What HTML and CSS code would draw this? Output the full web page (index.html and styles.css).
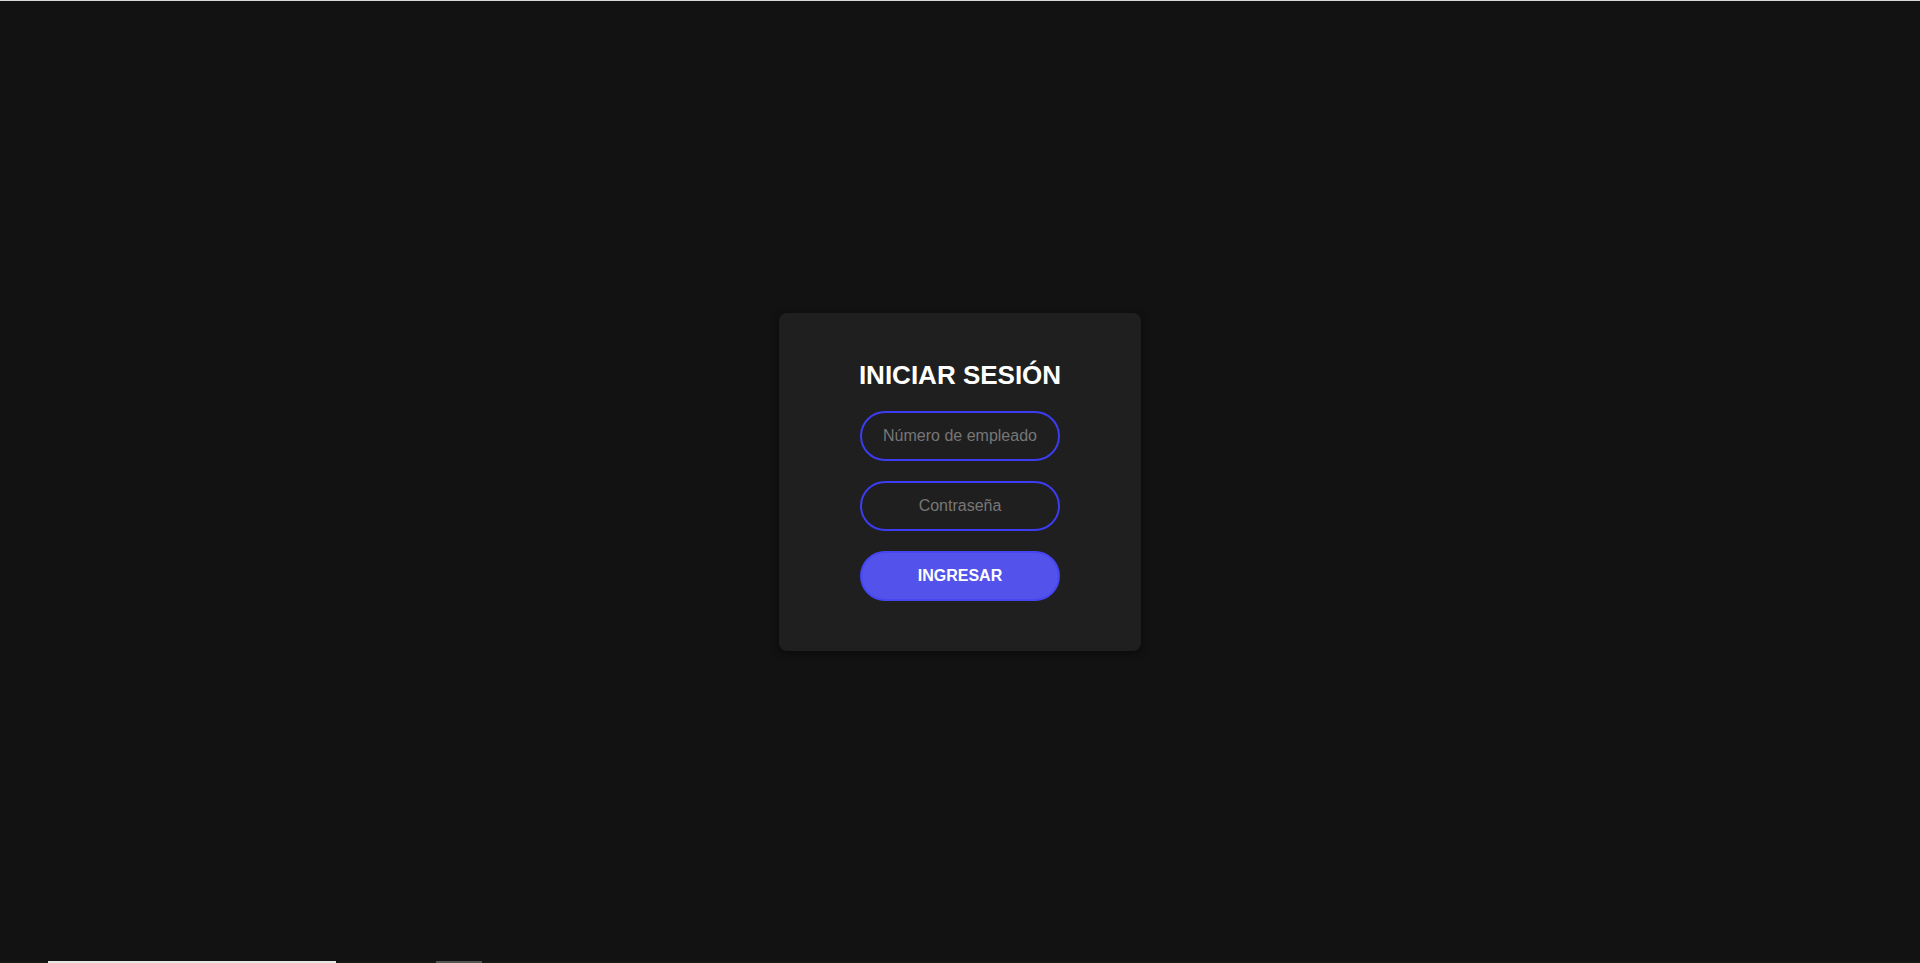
FILE: index.html
```html
<!DOCTYPE html>
<html lang="es">
<head>
<meta charset="utf-8">
<title>Iniciar sesión</title>
<link rel="stylesheet" href="styles.css">
</head>
<body>
<main class="page">
  <section class="card">
    <h2 class="title">INICIAR SESIÓN</h2>
    <form class="form">
      <input class="field" type="text" placeholder="Número de empleado">
      <input class="field" type="password" placeholder="Contraseña">
      <button class="btn" type="button">INGRESAR</button>
    </form>
  </section>
</main>
<div class="taskstrip">
  <span class="strip-white"></span>
  <span class="strip-gray"></span>
</div>
</body>
</html>
```

FILE: styles.css
```css
html, body {
  margin: 0;
  padding: 0;
}

body {
  background: #121212;
  font-family: "Liberation Sans", Arial, sans-serif;
  border-top: 1px solid #d8d8d8;
  box-sizing: border-box;
  height: 100vh;
  overflow: hidden;
}

.page {
  height: 100%;
  display: flex;
  align-items: center;
  justify-content: center;
}

.card {
  background: #1f1f1f;
  border-radius: 8px;
  padding: 47px 80px 50px;
  box-shadow: 0 2px 10px rgba(0, 0, 0, 0.45);
  display: flex;
  flex-direction: column;
  align-items: center;
}

.title {
  margin: 0 0 21px;
  font-size: 26px;
  line-height: 30px;
  font-weight: bold;
  color: #ffffff;
  text-align: center;
}

.form {
  display: flex;
  flex-direction: column;
  gap: 20px;
  width: 200px;
}

.field {
  box-sizing: border-box;
  width: 200px;
  height: 50px;
  border: 2px solid #3c3cf2;
  border-radius: 25px;
  background: transparent;
  color: #dddddd;
  font-family: "Liberation Sans", Arial, sans-serif;
  font-size: 16px;
  text-align: center;
  padding: 0 10px;
  outline: none;
}

.field::placeholder {
  color: #777777;
}

.btn {
  box-sizing: border-box;
  width: 200px;
  height: 50px;
  border: 2px solid #4545f2;
  border-radius: 25px;
  background: #5353ec;
  color: #ffffff;
  font-family: "Liberation Sans", Arial, sans-serif;
  font-size: 16px;
  font-weight: bold;
  cursor: pointer;
}

.taskstrip {
  position: fixed;
  left: 0;
  right: 0;
  bottom: 0;
  height: 2px;
  background: #181818;
}

.strip-white {
  position: absolute;
  left: 48px;
  width: 288px;
  top: 0;
  height: 2px;
  background: #e6e6e6;
}

.strip-gray {
  position: absolute;
  left: 436px;
  width: 46px;
  top: 0;
  height: 2px;
  background: #555555;
}
```
